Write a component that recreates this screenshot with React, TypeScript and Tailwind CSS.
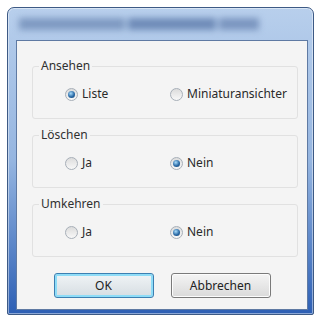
import type { ReactNode } from 'react'

function Radio({ checked, label }: { checked?: boolean; label: string }) {
  return (
    <div className="flex items-center gap-[4px]">
      <span className="w-[13px] h-[13px] rounded-full border border-[#a7afb8] bg-linear-to-b from-[#dcdcdc] to-[#f8f8f8] flex items-center justify-center">
        {checked && (
          <span className="w-[7px] h-[7px] rounded-full bg-[radial-gradient(circle_at_40%_35%,#a8dcfb,#2a6aa6_55%,#123e6c)]" />
        )}
      </span>
      <span className="text-[12px] leading-[16px] text-[#2a2a2a]">{label}</span>
    </div>
  )
}

function Group({ title, children }: { title: string; children: ReactNode }) {
  return (
    <fieldset className="border border-[#e1e1e1] rounded-[3px] pl-[6px] pb-[16px]">
      <legend className="px-[2px] text-[12px] leading-[16px] text-[#303030]">{title}</legend>
      <div className="mt-[12px] ml-[26px] grid grid-cols-[105px_1fr] h-[16px]">{children}</div>
    </fieldset>
  )
}

export default function App() {
  return (
    <div className="w-[318px] h-[320px] bg-white pt-[7px] pl-[7px] pr-[4px] pb-[5px] font-['Noto_Sans',sans-serif]">
      <div className="h-full flex flex-col rounded-t-[7px] rounded-b-[2px] border border-[#3d5a85] bg-linear-to-b from-[#b8cfec] via-[#95b5e0] to-[#2d5fb4] pl-[8px] pr-[5px] pb-[4px] shadow-[inset_0_0_0_1px_rgba(255,255,255,0.45)]">
        {/* Title bar (blurred) */}
        <div className="h-[32px] flex items-center pl-[3px] gap-[3px] blur-[3px]">
          <span className="w-[106px] h-[12px] bg-[#7f9ac2]" />
          <span className="w-[88px] h-[12px] bg-[#6f8cb8]" />
          <span className="w-[40px] h-[12px] bg-[#7b96c0]" />
        </div>

        {/* Client area */}
        <div className="flex-1 bg-[#f4f4f4] border border-[#5f7aa3] flex flex-col pt-[17px] pl-[15px] pr-[9px]">
          <div className="flex flex-col gap-[8px]">
            <Group title="Ansehen">
              <Radio checked label="Liste" />
              <Radio label="Miniaturansichter" />
            </Group>
            <Group title="Löschen">
              <Radio label="Ja" />
              <Radio checked label="Nein" />
            </Group>
            <Group title="Umkehren">
              <Radio label="Ja" />
              <Radio checked label="Nein" />
            </Group>
          </div>

          <div className="mt-[16px] flex justify-center gap-[17px] pr-[6px]">
            <button className="w-[100px] h-[25px] rounded-[3px] border border-[#3c7fb1] bg-linear-to-b from-[#f0f4f6] to-[#d6dde2] shadow-[inset_0_0_0_2px_#8edcf7] text-[12px] text-[#222]">
              OK
            </button>
            <button className="w-[100px] h-[25px] rounded-[3px] border border-[#7a7a7a] bg-linear-to-b from-[#f4f4f4] to-[#dadada] shadow-[inset_0_0_0_1px_#fcfcfc] text-[12px] text-[#222]">
              Abbrechen
            </button>
          </div>
        </div>
      </div>
    </div>
  )
}
